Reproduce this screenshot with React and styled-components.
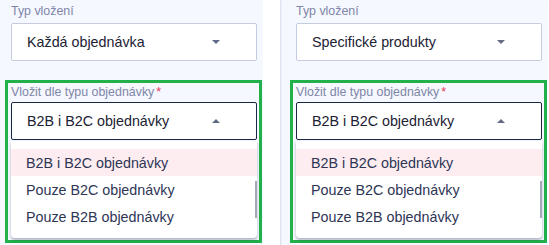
import React from "react"
import styled, { createGlobalStyle } from "styled-components"

const Global = createGlobalStyle`
  body {
    margin: 0;
    background: #ffffff;
    font-family: "Liberation Sans", Arial, sans-serif;
  }
`

const Row = styled.div`
  display: flex;
  gap: 17px;
  margin-left: -5px;
  height: 245px;
  overflow: hidden;
`

const Panel = styled.div`
  width: 268px;
  flex: none;
  box-sizing: border-box;
  padding: 3px 6px 0 16px;
  background: #f5f8fe;
  box-shadow: inset 2px 0 2px -1px rgba(160, 170, 200, 0.35);
`

const Label = styled.div`
  font-size: 12.4px;
  line-height: 16px;
  color: #7f86a8;
  margin-bottom: ${(p) => p.$gap || 4}px;
  white-space: nowrap;

  span {
    color: #e5375f;
    margin-left: 2px;
  }
`

const Select = styled.div`
  height: 38px;
  box-sizing: border-box;
  display: flex;
  align-items: center;
  justify-content: space-between;
  padding: 0 36px 0 15px;
  background: #ffffff;
  border: 1px solid ${(p) => (p.$open ? "#1b2748" : "#c6ccdf")};
  border-radius: 2px;
  font-size: 14.3px;
  color: #1c2133;
`

const Caret = styled.i`
  width: 0;
  height: 0;
  border-left: 4px solid transparent;
  border-right: 4px solid transparent;
  ${(p) =>
    p.$up
      ? "border-bottom: 4px solid #636a84;"
      : "border-top: 4px solid #636a84;"}
`

const Highlight = styled.div`
  margin: 19px -5px 0 -6px;
  padding: 1px 2px 2px 3px;
  border: 3px solid #22b04b;
`

const Menu = styled.ul`
  position: relative;
  list-style: none;
  margin: 1px 0 0;
  padding: 8px 0;
  background: #ffffff;
  border-radius: 0 0 4px 4px;
  box-shadow: 0 2px 3px rgba(40, 50, 80, 0.35);
`

const Item = styled.li`
  height: 27px;
  display: flex;
  align-items: center;
  padding-left: 15px;
  font-size: 14.3px;
  color: #2e3555;
  background: ${(p) => (p.$active ? "#fdedf1" : "transparent")};
`

const Thumb = styled.div`
  position: absolute;
  right: 0;
  top: 40px;
  width: 2px;
  height: 37px;
  background: #a4a9bb;
`

const Below = styled.div`
  margin-top: 2px;
  font-size: 13px;
  color: #2e3555;
  white-space: nowrap;
`

const options = ["B2B i B2C objednávky", "Pouze B2C objednávky", "Pouze B2B objednávky"]

const Field = ({ type, extra }) => (
  <Panel>
    <Label>Typ vložení</Label>
    <Select>
      {type}
      <Caret />
    </Select>
    <Highlight>
      <Label $gap={2}>
        Vložit dle typu objednávky<span>*</span>
      </Label>
      <Select $open>
        {options[0]}
        <Caret $up />
      </Select>
      <Menu>
        {options.map((o, i) => (
          <Item key={o} $active={i === 0}>
            {o}
          </Item>
        ))}
        <Thumb />
      </Menu>
    </Highlight>
    {extra && <Below>Vyberte produkty, na které se vložení vztahuje</Below>}
  </Panel>
)

export default function App() {
  return (
    <>
      <Global />
      <Row>
        <Field type="Každá objednávka" />
        <Field type="Specifické produkty" extra />
      </Row>
    </>
  )
}
